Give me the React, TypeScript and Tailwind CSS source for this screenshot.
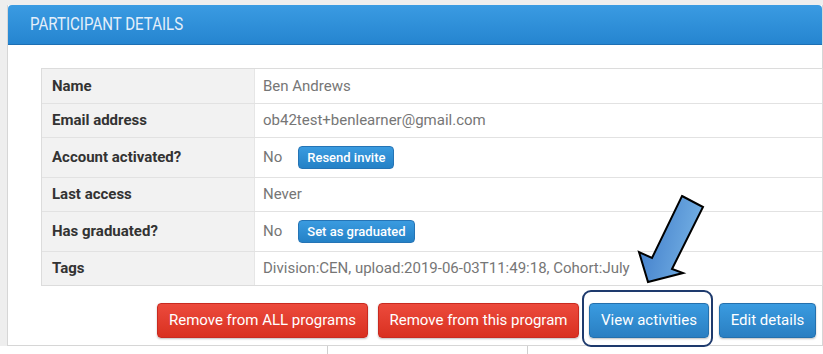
import React from "react";

const rows: { label: string; value: string; button?: string; tall?: boolean }[] = [
  { label: "Name", value: "Ben Andrews" },
  { label: "Email address", value: "ob42test+benlearner@gmail.com" },
  { label: "Account activated?", value: "No", button: "Resend invite", tall: true },
  { label: "Last access", value: "Never" },
  { label: "Has graduated?", value: "No", button: "Set as graduated", tall: true },
  { label: "Tags", value: "Division:CEN, upload:2019-06-03T11:49:18, Cohort:July" },
];

function SmallBtn({ children }: { children: React.ReactNode }) {
  return (
    <span className="ml-[16px] inline-flex h-[23px] items-center rounded-[4px] border border-[#2574b5] bg-gradient-to-b from-[#3a9be0] to-[#2481c6] px-[8px] text-[13px] font-medium text-white">
      {children}
    </span>
  );
}

export default function App() {
  return (
    <div className="relative h-[354px] w-[823px] overflow-hidden bg-[#eeeeee] font-['Roboto',sans-serif]">
      <div className="pl-[7px] pt-[5px]">
        <div className="flex h-[341px] w-[816px] flex-col border-x border-b border-[#d6d6d6] bg-white">
          <div className="flex h-[40px] shrink-0 items-center rounded-t-[4px] border-b border-[#1d6fb3] bg-gradient-to-b from-[#3a9be2] to-[#2585d0] pl-[22px]">
            <span className="inline-block origin-left scale-x-[0.86] text-[17.5px] leading-none text-[#e4effa]">
              PARTICIPANT DETAILS
            </span>
          </div>
          <div className="pl-[33px] pt-[23px]">
            <div className="w-[782px] border border-[#dcdcdc] text-[15px]">
              {rows.map((r, i) => (
                <div
                  key={r.label}
                  className={`flex ${r.tall ? "h-[40px]" : "h-[34px]"} ${i > 0 ? "border-t border-[#e2e2e2]" : ""}`}
                >
                  <div className="flex w-[213px] shrink-0 items-center border-r border-[#e6e6e6] bg-[#f2f2f2] pl-[10px] font-bold text-[#333333]">
                    {r.label}
                  </div>
                  <div className="flex flex-1 items-center bg-white pl-[8px] text-[#767676]">
                    <span>{r.value}</span>
                    {r.button && <SmallBtn>{r.button}</SmallBtn>}
                  </div>
                </div>
              ))}
            </div>
          </div>
          <div className="mt-[17px] flex justify-end gap-[10px] pr-[6px] text-[15px] text-white">
            <button className="h-[35px] w-[211px] rounded-[4px] border border-[#c92a20] bg-gradient-to-b from-[#ec4a3c] to-[#d9301f] shadow-[0_1px_2px_rgba(0,0,0,0.25)]">
              Remove from ALL programs
            </button>
            <button className="h-[35px] w-[201px] rounded-[4px] border border-[#c92a20] bg-gradient-to-b from-[#ec4a3c] to-[#d9301f] shadow-[0_1px_2px_rgba(0,0,0,0.25)]">
              Remove from this program
            </button>
            <button className="h-[35px] w-[120px] rounded-[4px] border border-[#2470ad] bg-gradient-to-b from-[#3a9be0] to-[#2a7fc2] shadow-[0_1px_2px_rgba(0,0,0,0.25)]">
              View activities
            </button>
            <button className="h-[35px] w-[97px] rounded-[4px] border border-[#2470ad] bg-gradient-to-b from-[#3a9be0] to-[#2a7fc2] shadow-[0_1px_2px_rgba(0,0,0,0.25)]">
              Edit details
            </button>
          </div>
        </div>
      </div>
      <div className="flex h-[8px] bg-white">
        <div className="w-[328px] border-r border-[#cfcfcf]" />
        <div className="w-[200px] border-r border-[#cfcfcf]" />
      </div>

      <div className="absolute left-[582px] top-[290px] h-[57px] w-[131px] rounded-[9px] border-2 border-[#1e3a6d]" />

      <svg className="absolute left-0 top-0" width="823" height="354" viewBox="0 0 823 354">
        <defs>
          <linearGradient id="ag" x1="0" y1="0" x2="1" y2="0.3">
            <stop offset="0" stopColor="#3b78c8" />
            <stop offset="1" stopColor="#73afe3" />
          </linearGradient>
        </defs>
        <polygon
          points="682,196 703,207 672,269 683,273 648,282 639,252 652,258"
          fill="url(#ag)"
          stroke="#000"
          strokeWidth="2"
          strokeLinejoin="miter"
        />
      </svg>
    </div>
  );
}
